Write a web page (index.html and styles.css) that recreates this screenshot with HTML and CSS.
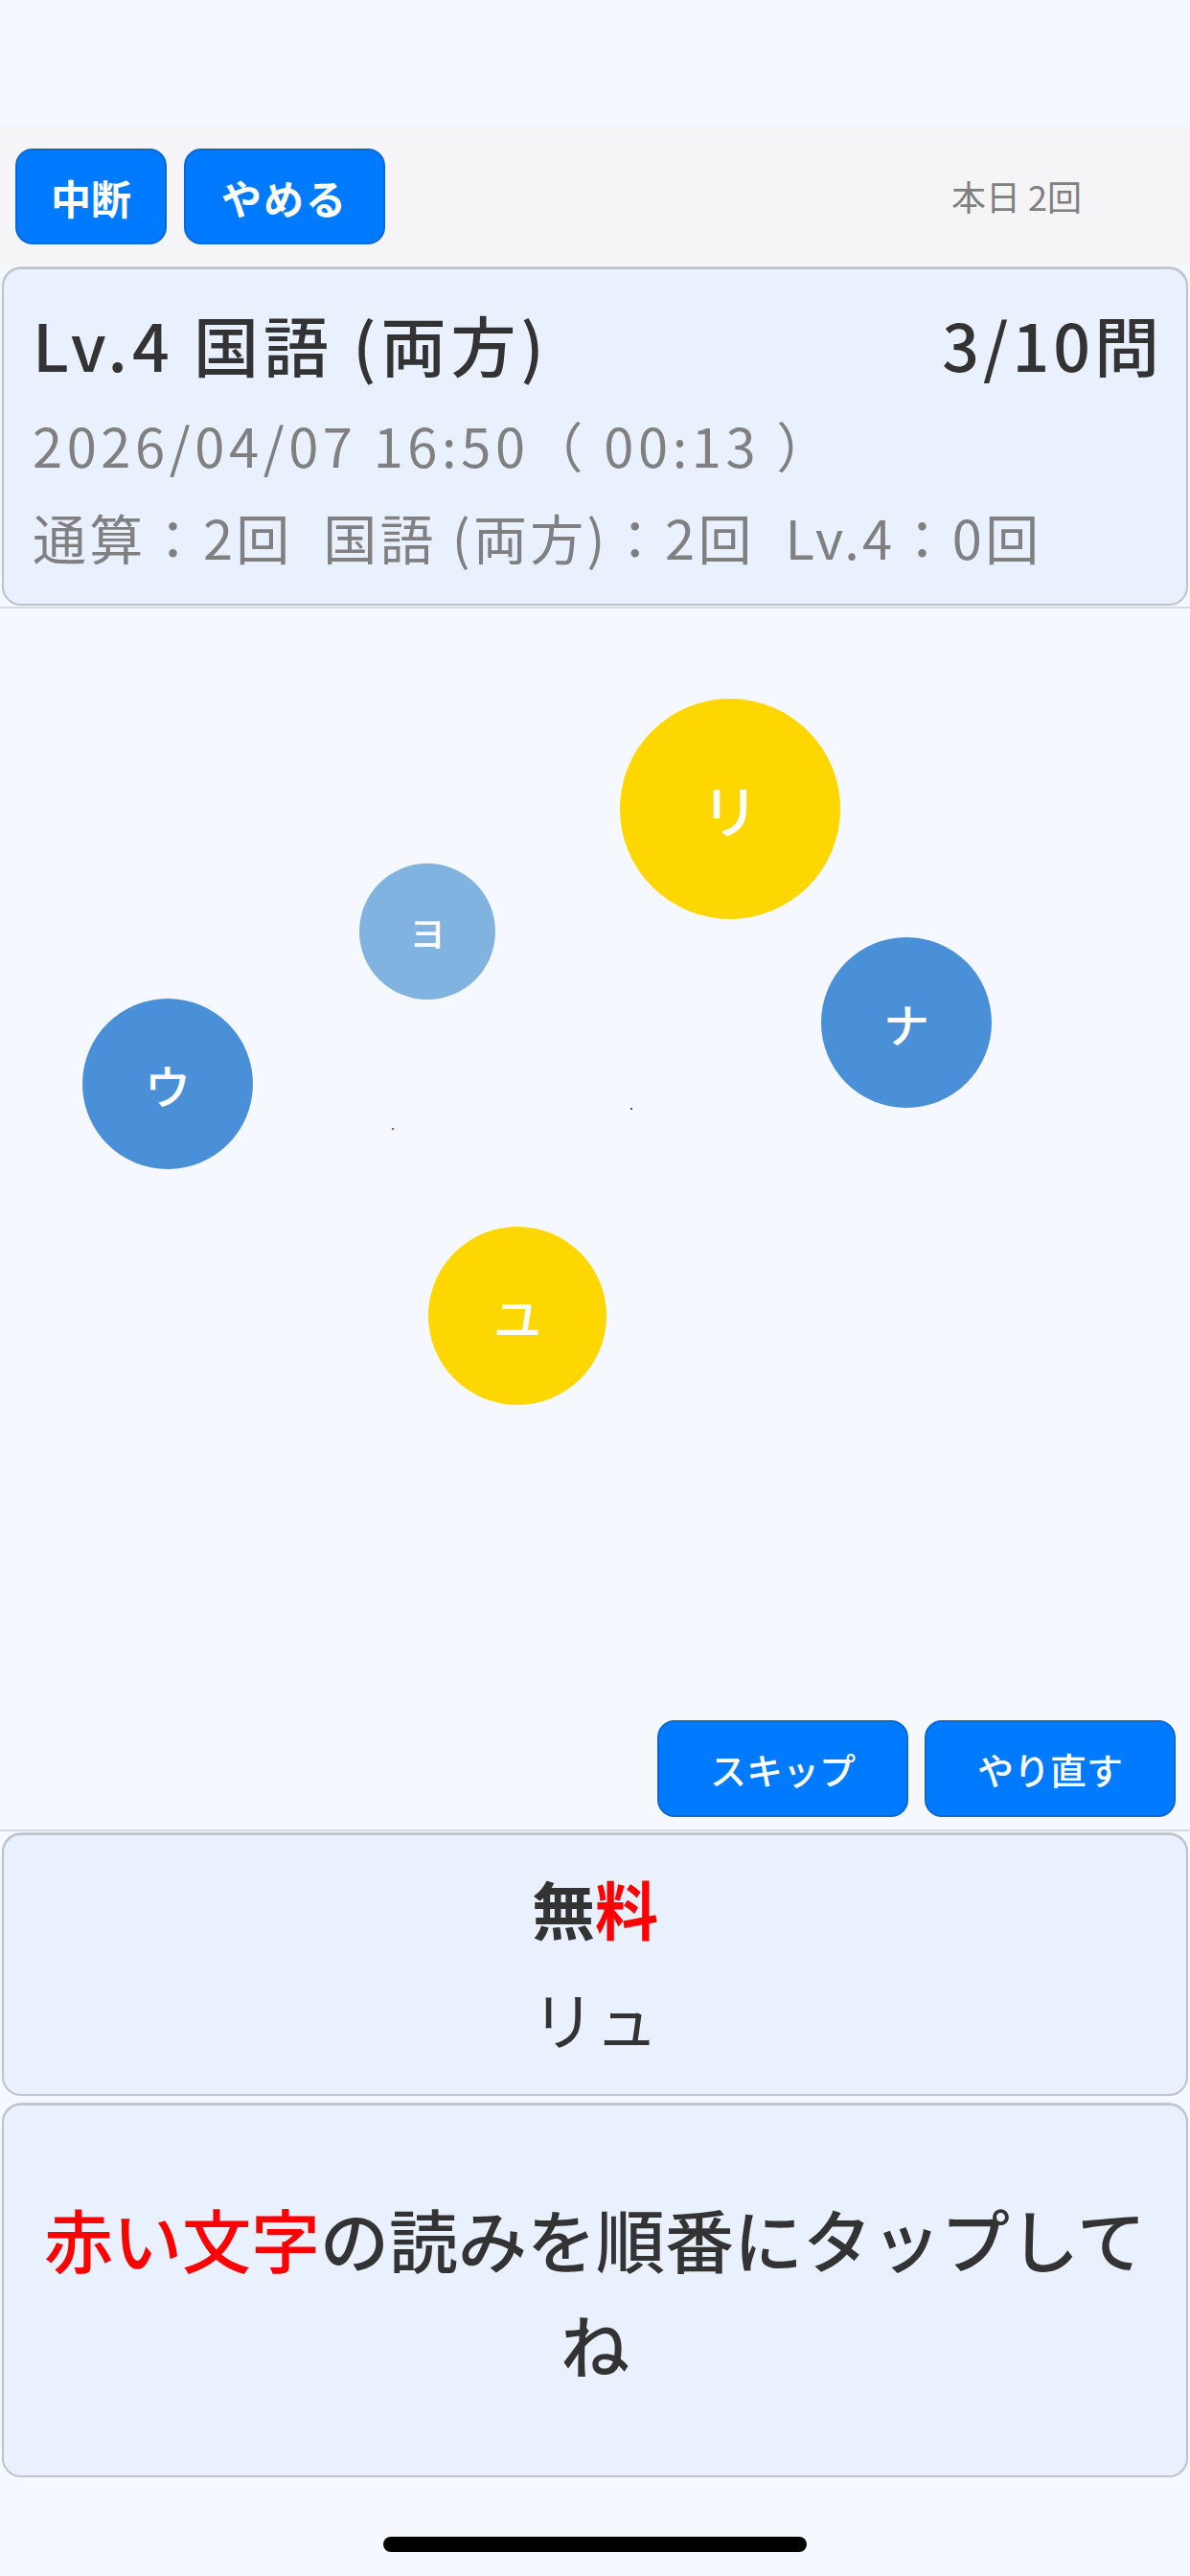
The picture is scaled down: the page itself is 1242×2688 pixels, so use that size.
FILE: index.html
```html
<!DOCTYPE html>
<html lang="ja">
<head>
<meta charset="utf-8">
<title>Quiz</title>
<link rel="stylesheet" href="styles.css">
</head>
<body>
<div class="screen">
  <div class="status"></div>
  <div class="toolbar">
    <button class="btn btn-top btn-pause">中断</button>
    <button class="btn btn-top btn-quit">やめる</button>
    <div class="today">本日 2回</div>
  </div>
  <div class="card header">
    <div class="title-row">
      <span class="title">Lv.4 国語 (両方)</span>
      <span class="count">3/10問</span>
    </div>
    <div class="meta meta-date">2026/04/07 16:50（ 00:13 ）</div>
    <div class="meta meta-stats">通算：2回&nbsp; 国語 (両方)：2回&nbsp; Lv.4：0回</div>
  </div>
  <div class="play">
    <div class="ball yellow" style="left:647px;top:94px;width:230px;height:230px;font-size:60px">リ</div>
    <div class="ball light" style="left:375px;top:266px;width:142px;height:142px;font-size:38px">ヨ</div>
    <div class="ball blue" style="left:857px;top:343px;width:178px;height:178px;font-size:48px">ナ</div>
    <div class="ball blue" style="left:86px;top:407px;width:178px;height:178px;font-size:48px">ウ</div>
    <div class="ball yellow" style="left:447px;top:645px;width:186px;height:186px;font-size:50px">ユ</div>
    <div class="dot red-dot" style="left:409px;top:542px"></div>
    <div class="dot dark-dot" style="left:658px;top:521px"></div>
    <div class="actions">
      <button class="btn btn-act">スキップ</button>
      <button class="btn btn-act">やり直す</button>
    </div>
  </div>
  <div class="card question">
    <div class="kanji">無<span class="red">料</span></div>
    <div class="reading">リュ</div>
  </div>
  <div class="card instruction">
    <p class="hint"><span class="red">赤い文字</span>の読みを順番にタップしてね</p>
  </div>
  <div class="footer"><div class="home"></div></div>
</div>
</body>
</html>
```
FILE: styles.css
```css
* { box-sizing: border-box; }
html, body {
  margin: 0;
  padding: 0;
  background: #f5f8ff;
}
body {
  font-family: "Noto Sans CJK JP", "Noto Sans", sans-serif;
  color: #333333;
}
.screen {
  width: 1242px;
  height: 2688px;
  display: flex;
  flex-direction: column;
  overflow: hidden;
}
.status {
  height: 131px;
  background: #f5f8ff;
}
.toolbar {
  height: 146px;
  background: #f5f5f7;
  display: flex;
  align-items: center;
  gap: 18px;
  padding: 0 113px 0 16px;
}
.btn {
  font-family: "Noto Sans CJK JP", sans-serif;
  background: #007aff;
  color: #ffffff;
  border: 2px solid #0a68d6;
  border-radius: 18px;
  cursor: pointer;
  display: flex;
  align-items: center;
  justify-content: center;
  padding: 0;
}
.btn-top {
  height: 100px;
  font-size: 42px;
  font-weight: 700;
  margin-top: 2px;
}
.btn-pause { width: 158px; }
.btn-quit { width: 210px; letter-spacing: 2px; }
.today {
  margin-left: auto;
  font-size: 36px;
  color: #7f7f7f;
}
.card {
  margin: 0 2px;
  background: #e9f0fe;
  border: 2px solid #bfc4cc;
  border-radius: 20px;
  box-shadow: 0 -1px 0 #c9ced6;
}
.header {
  margin-top: 2px;
  height: 353px;
  padding: 33px 28px 0 30px;
}
.title-row {
  display: flex;
  justify-content: space-between;
  align-items: center;
  height: 100px;
  padding-bottom: 10px;
}
.title, .count {
  font-size: 68px;
  font-weight: 500;
  color: #333333;
  line-height: 90px;
}
.title { letter-spacing: 5px; }
.count { letter-spacing: 4px; margin-right: -4px; }
.meta {
  font-size: 56px;
  color: #808080;
  line-height: 96px;
  white-space: nowrap;
}
.meta-date { letter-spacing: 4.6px; margin-top: 2px; }
.meta-stats { letter-spacing: 3.3px; }
.play {
  position: relative;
  height: 1278px;
  border-top: 2px solid #d7dade;
  border-bottom: 2px solid #d7dade;
  margin-top: 1px;
  display: flex;
  flex-direction: column;
  justify-content: flex-end;
  align-items: flex-end;
  padding: 0 15px 13px 0;
}
.ball {
  position: absolute;
  border-radius: 50%;
  color: #ffffff;
  font-weight: 500;
  display: flex;
  align-items: center;
  justify-content: center;
  line-height: 1;
}
.yellow { background: #ffd700; }
.blue { background: #4a90d9; }
.light { background: #80b3e0; }
.dot {
  position: absolute;
  width: 2px;
  height: 2px;
}
.red-dot { background: #e04040; }
.dark-dot { background: #555555; }
.actions {
  display: flex;
  gap: 17px;
}
.btn-act {
  width: 262px;
  height: 101px;
  font-size: 38px;
  font-weight: 500;
}
.question {
  margin-top: 2px;
  height: 274px;
  padding: 18px 0 0;
  text-align: center;
}
.kanji {
  font-size: 66px;
  font-weight: 700;
  line-height: 115px;
}
.reading {
  font-size: 66px;
  line-height: 115px;
}
.red { color: #ff0000; }
.instruction {
  margin-top: 8px;
  height: 390px;
  display: flex;
  align-items: center;
  justify-content: center;
  padding: 0 28px;
}
.hint {
  margin: 0;
  font-size: 72px;
  line-height: 110px;
  text-align: center;
  font-weight: 500;
}
.footer {
  flex: 1;
  display: flex;
  justify-content: center;
  padding-top: 62px;
}
.home {
  width: 442px;
  height: 16px;
  border-radius: 8px;
  background: #000000;
}
```
